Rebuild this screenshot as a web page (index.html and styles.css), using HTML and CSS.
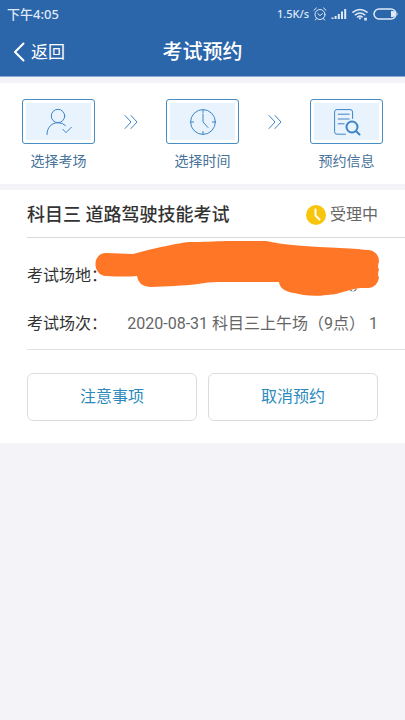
FILE: index.html
```html
<!DOCTYPE html>
<html lang="zh-CN">
<head>
<meta charset="utf-8">
<meta name="viewport" content="width=device-width, initial-scale=1">
<title>考试预约</title>
<link rel="stylesheet" href="styles.css">
</head>
<body>
<header class="top">
  <div class="status">
    <span class="clock">下午4:05</span>
    <div class="indicators">
      <span>1.5K/s</span>
      <svg width="14" height="14" viewBox="0 0 14 14"><circle cx="7" cy="7.5" r="5"/><path d="M1 3.2 3.4 1M13 3.2 10.6 1M4.8 6.6 7 8.6 9.4 6.6M3.4 11.6 2.4 13M10.6 11.6l1 1.4"/></svg>
      <svg class="signal" width="16" height="12" viewBox="0 0 16 12"><path d="M1.5 11V9.5M4.6 11V8M7.8 11V6M11 11V3.5M14.2 11V1"/></svg>
      <svg class="wifi" width="18" height="14" viewBox="0 0 18 14"><path d="M2 5.200Q9-.4 16 5.200M4.300 7.800Q9 4 13.700 7.800M6.500 10Q9 8.200 11.200 9.800"/><path class="solid" d="M7.200 10.800Q9 9.600 10.600 10.800L9 12.800ZM13.200 10.800h2.600v2.600h-2.600Z"/></svg>
      <svg class="battery" width="26" height="12" viewBox="0 0 26 12"><rect x="1" y="1" width="22" height="10" rx="5"/><path class="solid" d="M18 3h1.5a3 3 0 0 1 0 6H18ZM24 4.5q1.5 1.5 0 3Z"/></svg>
    </div>
  </div>
  <nav class="nav">
    <a class="back" href="#"><svg width="12" height="20" viewBox="0 0 12 20"><path d="M10.5 1.5 2 10l8.5 8.5"/></svg>返回</a>
    <h1>考试预约</h1>
  </nav>
</header>
<main>
  <section class="steps">
    <div class="step">
      <div class="tile"><svg width="28" height="28" viewBox="0 0 28 28"><circle cx="13" cy="8" r="6.7"/><path d="M2 26.5C2 19 7 14.7 13 14.7q4.5 0 7.5 2.8M17.8 21.3l3.2 3.3 5.4-5.4"/></svg></div>
      <span>选择考场</span>
    </div>
    <svg class="chevrons" width="16" height="16" viewBox="0 0 16 16"><path d="m2 1.5 6 6.5-6 6.5M8 1.5 14 8l-6 6.5"/></svg>
    <div class="step">
      <div class="tile"><svg width="28" height="28" viewBox="0 0 28 28"><circle cx="14" cy="14" r="12.4"/><path d="M14 6v8l5 5.5M14 1.6v3M14 23.4v3M1.6 14h3M23.4 14h3"/></svg></div>
      <span>选择时间</span>
    </div>
    <svg class="chevrons" width="16" height="16" viewBox="0 0 16 16"><path d="m2 1.5 6 6.5-6 6.5M8 1.5 14 8l-6 6.5"/></svg>
    <div class="step">
      <div class="tile"><svg width="28" height="28" viewBox="0 0 28 28"><path d="M12.5 26.2H4a2.4 2.4 0 0 1-2.4-2.4V4A2.4 2.4 0 0 1 4 1.6h13A2.4 2.4 0 0 1 19.600 4v6.500M5.200 6.200h11M5.200 11h11M5.200 15.800h6"/><circle class="lens" cx="19" cy="19" r="5.500"/><path class="lens" d="m23 23 3.500 3.500"/></svg></div>
      <span>预约信息</span>
    </div>
  </section>
  <section class="card">
    <div class="heading">
      <h2>科目三 道路驾驶技能考试</h2>
      <div class="state"><svg width="20" height="20" viewBox="0 0 20 20"><circle cx="10" cy="10" r="10"/><path d="M9.500 4.500v6l4 4"/></svg>受理中</div>
    </div>
    <dl class="details">
      <div class="row">
        <dt>考试场地：</dt>
        <dd><svg class="redaction" width="288" height="60" viewBox="0 0 288 60"><path class="stroke-end" d="m257 50 2 1M263 47v3l-2 1"/><path d="M13 13 40 14Q54 10 68 7C83 4 91 2 100 2C118 2 122 1 139 1H168C179 1 180 3 190 4Q207 6 226 7C242 8 254 8 265 9Q271 10 276 10Q286 12 286 22Q284 26 286 30Q284 34 286 38Q284 47 276 48H268C254 49 250 54 234 55C219 57 210 55 201 53Q187 51 186 42H125Q115 42 105 44C88 46 76 46 57 47Q45 46 44 36Q31 37 13 36C-1 35-1 13 13 13Z"/></svg></dd>
      </div>
      <div class="row">
        <dt>考试场次：</dt>
        <dd>2020-08-31 科目三上午场（9点） 1</dd>
      </div>
    </dl>
    <div class="actions">
      <button type="button">注意事项</button>
      <button type="button">取消预约</button>
    </div>
  </section>
</main>
</body>
</html>
```
FILE: styles.css
```css
* { box-sizing: border-box; }

body {
  margin: 0;
  background: #f3f3f8;
  color: #333;
  font: 16px/24px Roboto, "Noto Sans CJK SC", sans-serif;
}

h1, h2, dl, dd { margin: 0; }

svg {
  display: block;
  flex: none;
  fill: none;
  stroke: currentColor;
  stroke-linecap: round;
  stroke-linejoin: round;
}

.top {
  background: #2b65aa;
  border-bottom: 1px solid #86a9d6;
  color: #fff;
}

.status {
  display: flex;
  align-items: center;
  justify-content: space-between;
  height: 28px;
  padding: 0 6px 0 7px;
  color: #dfeaf8;
  font: 500 12px/16px "Noto Sans", "Noto Sans CJK SC", sans-serif;
}

.clock { font-size: 13px; }

.indicators {
  display: flex;
  align-items: center;
  gap: 4px;
  font-size: 11px;
}

.signal { stroke-width: 2; stroke-linecap: butt; }
.wifi { stroke-width: 1.5; }
.battery { stroke-width: 1.5; }
.solid { fill: currentColor; stroke: none; }

.nav {
  display: grid;
  grid-template-columns: 1fr auto 1fr;
  align-items: center;
  height: 48px;
  padding: 0 13px;
}

.nav h1 { font-size: 20px; font-weight: 500; line-height: 28px; }

.back {
  display: flex;
  align-items: center;
  gap: 6px;
  color: inherit;
  text-decoration: none;
  font-size: 17px;
}

.back svg { stroke-width: 2; }

.steps {
  display: flex;
  align-items: flex-start;
  justify-content: space-between;
  margin: 6px 0;
  padding: 16px 22px 11px;
  background: #fff;
  color: #47729a;
  font-size: 14px;
}

.step {
  display: flex;
  flex-direction: column;
  align-items: center;
  gap: 5px;
}

.tile {
  display: grid;
  place-items: center;
  width: 73px;
  height: 45px;
  border: 1px solid #478dc4;
  border-radius: 3px;
  background: #e8f3fe;
  box-shadow: inset 0 0 0 3px #fff;
  color: #3d85c6;
}

.lens { stroke-width: 2; }

.chevrons { margin-top: 15px; color: #3d85c6; }

.card {
  padding: 0 0 22px 27px;
  background: #fff;
}

.heading {
  display: flex;
  align-items: center;
  justify-content: space-between;
  height: 48px;
  padding: 2px 27px 0 0;
  border-bottom: 1px solid #d9d9d9;
}

.heading h2 { font-size: 18px; font-weight: 500; }

.state {
  display: flex;
  align-items: center;
  gap: 4px;
  color: #666;
}

.state circle { fill: #f8c50d; stroke: none; }
.state path { stroke: #fff; stroke-width: 2; }

.details {
  display: grid;
  gap: 24px;
  padding: 26px 27px 13px 0;
  border-bottom: 1px solid #e2e2e2;
}

.row {
  position: relative;
  display: flex;
  justify-content: space-between;
  white-space: nowrap;
}

.row dd { color: #666; }

.redaction {
  position: absolute;
  top: -24px;
  right: -3px;
  fill: #ff7626;
  stroke: none;
}

.stroke-end { fill: none; stroke: #666; }

.actions {
  display: grid;
  grid-template-columns: 1fr 1fr;
  gap: 11px;
  padding: 23px 27px 0 0;
}

.actions button {
  height: 48px;
  padding: 0;
  border: 1px solid #dcdcdf;
  border-radius: 6px;
  background: #fff;
  color: #2b8abb;
  font: inherit;
}
```
